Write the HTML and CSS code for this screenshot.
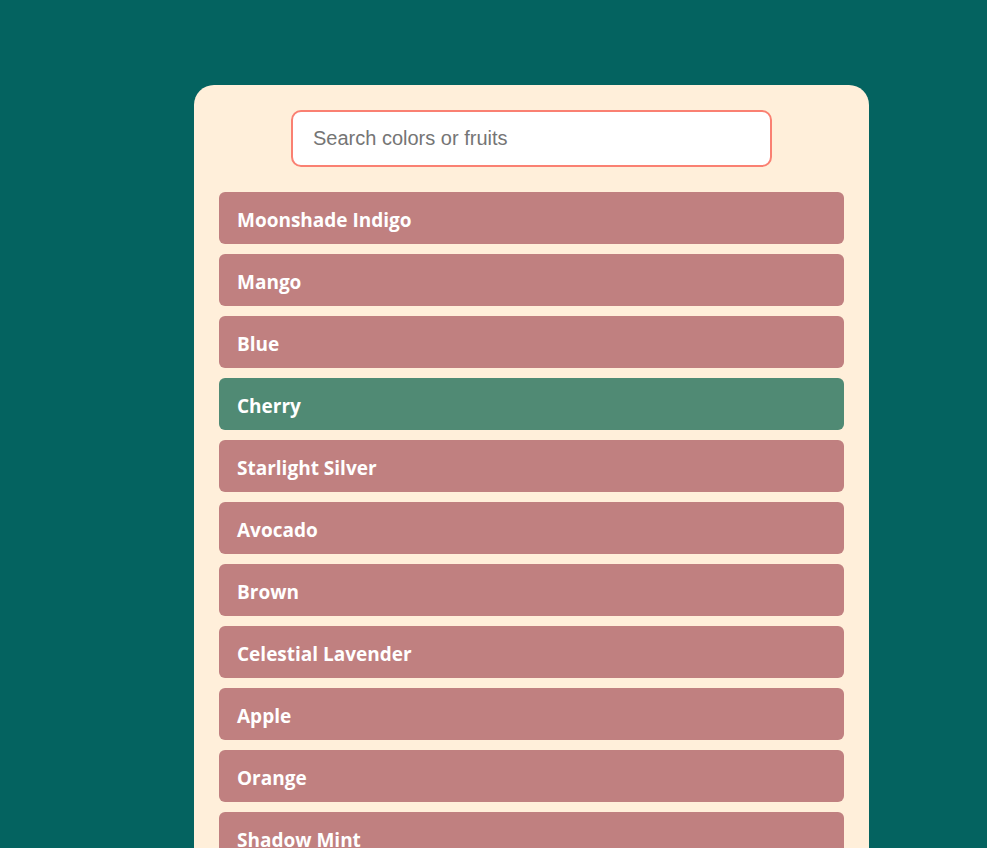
FILE: index.html
```
<!DOCTYPE html>
<html>
<head>
<meta charset="utf-8">
<link rel="stylesheet" href="styles.css">
</head>
<body>
<div class="card">
  <div class="search-wrap">
    <input class="search" type="text" placeholder="Search colors or fruits" autofocus>
  </div>
  <ul class="list">
    <li class="item">Moonshade Indigo</li>
    <li class="item">Mango</li>
    <li class="item">Blue</li>
    <li class="item active">Cherry</li>
    <li class="item">Starlight Silver</li>
    <li class="item">Avocado</li>
    <li class="item">Brown</li>
    <li class="item">Celestial Lavender</li>
    <li class="item">Apple</li>
    <li class="item">Orange</li>
    <li class="item">Shadow Mint</li>
  </ul>
</div>
</body>
</html>
```
FILE: styles.css
```
html, body {
  margin: 0;
  padding: 0;
  background: #046360;
  height: 100%;
  overflow: hidden;
}
body {
  padding-top: 85px;
  padding-left: 194px;
  box-sizing: border-box;
}
.card {
  width: 675px;
  background: #ffefda;
  border-radius: 20px;
  padding: 25px;
  box-sizing: border-box;
}
.search-wrap {
  display: flex;
  justify-content: center;
  margin-bottom: 25px;
}
.search {
  width: 481px;
  height: 57px;
  box-sizing: border-box;
  border: 2px solid #fa8072;
  border-radius: 10px;
  padding: 0 20px;
  font-family: "Liberation Sans", Arial, sans-serif;
  font-size: 20px;
  color: #333;
  background: #fff;
  outline: none;
  caret-color: #000;
}
.search::placeholder {
  color: #757575;
}
.list {
  list-style: none;
  margin: 0;
  padding: 0;
  display: flex;
  flex-direction: column;
  gap: 10px;
}
.item {
  height: 52px;
  background: #c08080;
  border-radius: 6px;
  color: #fff;
  font-family: "Open Sans", sans-serif;
  font-weight: 700;
  font-size: 19px;
  display: flex;
  align-items: center;
  padding: 4px 18px 0;
  box-sizing: border-box;
}
.item.active {
  background: #508a74;
}
```
